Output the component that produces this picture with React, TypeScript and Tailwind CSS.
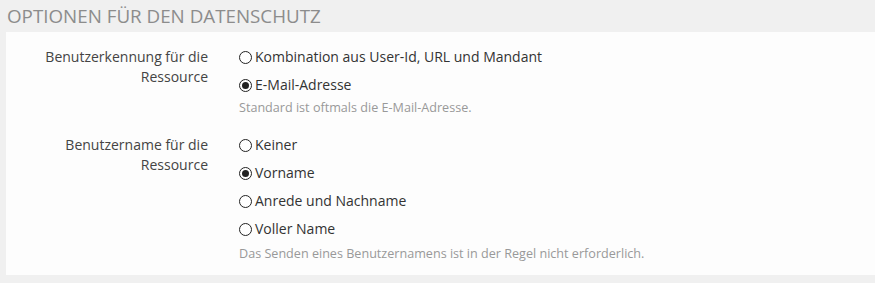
import React, { useState } from 'react';

type Option = { value: string; label: string };

interface RadioGroupProps {
    label: string[];
    options: Option[];
    value: string;
    onChange: (v: string) => void;
    hint: string;
    hintClassName?: string;
}

const Radio: React.FC<{ checked: boolean }> = ({ checked }) => (
    <span className="flex items-center justify-center w-[13px] h-[13px] rounded-full border border-[#222] bg-white shrink-0">
        {checked && <span className="w-[7px] h-[7px] rounded-full bg-[#222]" />}
    </span>
);

const RadioGroup: React.FC<RadioGroupProps> = ({ label, options, value, onChange, hint, hintClassName }) => (
    <div className="flex">
        {/* Label column */}
        <div className="w-[202px] shrink-0 text-right text-[14px] leading-[20px] text-[#444]">
            {label.map((l) => (
                <div key={l}>{l}</div>
            ))}
        </div>

        {/* Options */}
        <div className="ml-[31px] flex flex-col">
            {options.map((opt, i) => (
                <label
                    key={opt.value}
                    onClick={() => onChange(opt.value)}
                    className={`flex items-center gap-[3px] text-[14px] leading-[20px] text-[#333] cursor-pointer ${i > 0 ? 'mt-[8px]' : ''}`}
                >
                    <Radio checked={value === opt.value} />
                    <span>{opt.label}</span>
                </label>
            ))}
            <p className={`text-[12.6px] leading-[18px] text-[#999] ${hintClassName ?? 'mt-[4px]'}`}>{hint}</p>
        </div>
    </div>
);

export default function App() {
    const [kennung, setKennung] = useState('email');
    const [name, setName] = useState('vorname');

    return (
        <div
            className="w-[875px] h-[283px] bg-[#f0f0f0] overflow-hidden"
            style={{ fontFamily: '"Open Sans", sans-serif' }}
        >
            {/* Header */}
            <h2 className="h-[32px] pl-[7px] pt-[4px] text-[18.8px] leading-[24px] text-[#8c8c8c] uppercase">
                Optionen für den Datenschutz
            </h2>

            {/* Panel */}
            <div className="ml-[6px] h-[243px] bg-[#fdfdfd] pt-[15px] flex flex-col gap-[18px]">
                <RadioGroup
                    label={['Benutzerkennung für die', 'Ressource']}
                    options={[
                        { value: 'kombi', label: 'Kombination aus User-Id, URL und Mandant' },
                        { value: 'email', label: 'E-Mail-Adresse' },
                    ]}
                    value={kennung}
                    onChange={setKennung}
                    hint="Standard ist oftmals die E-Mail-Adresse."
                />
                <RadioGroup
                    label={['Benutzername für die', 'Ressource']}
                    options={[
                        { value: 'keiner', label: 'Keiner' },
                        { value: 'vorname', label: 'Vorname' },
                        { value: 'anrede', label: 'Anrede und Nachname' },
                        { value: 'voll', label: 'Voller Name' },
                    ]}
                    value={name}
                    onChange={setName}
                    hint="Das Senden eines Benutzernamens ist in der Regel nicht erforderlich."
                    hintClassName="mt-[6px]"
                />
            </div>
        </div>
    );
}
